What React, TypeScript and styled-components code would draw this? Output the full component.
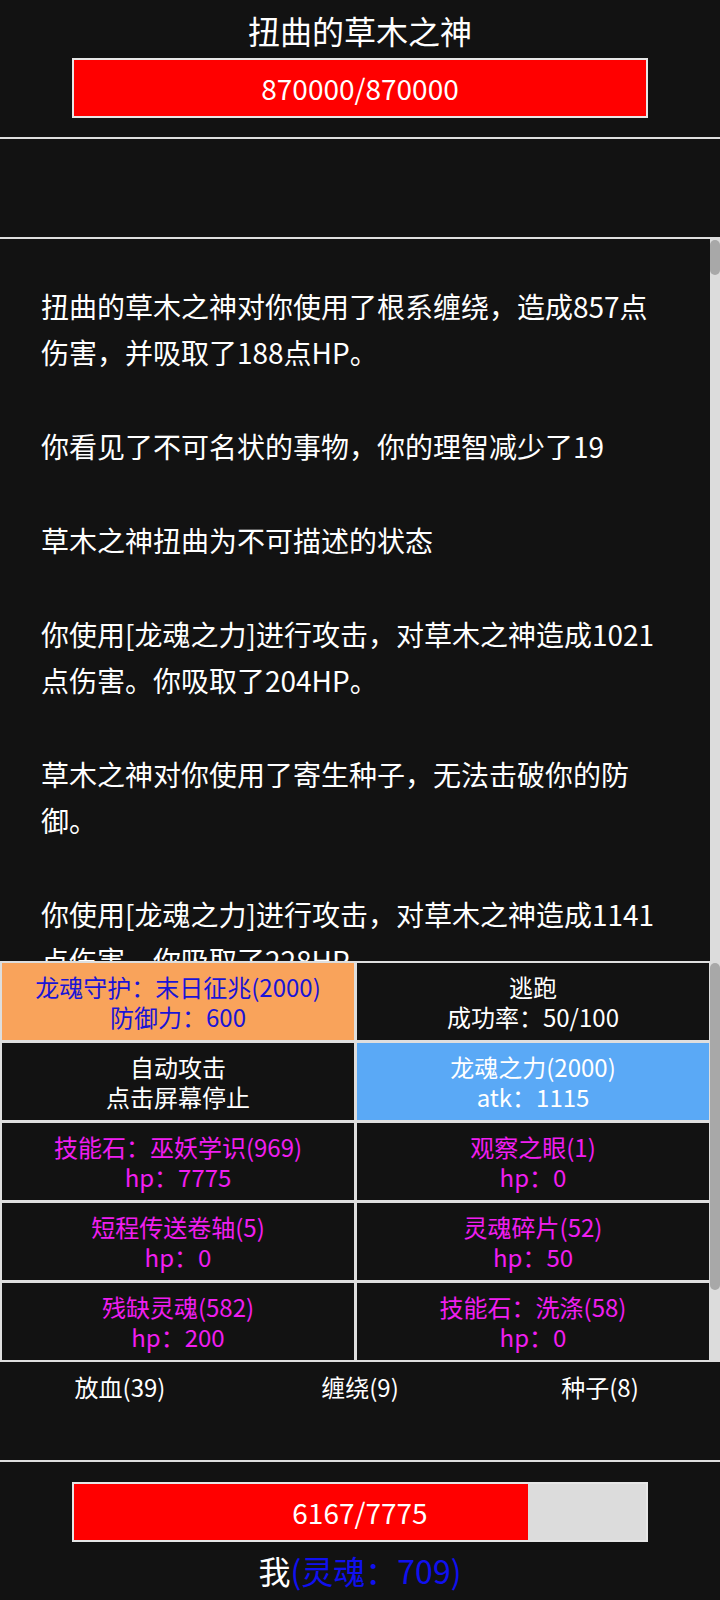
import styled, { createGlobalStyle } from 'styled-components';

const GlobalStyle = createGlobalStyle`
  html, body {
    margin: 0;
    padding: 0;
    background: #121212;
  }
  body {
    font-family: "Noto Sans CJK SC", "Noto Sans", sans-serif;
    color: #fff;
  }
  * {
    box-sizing: border-box;
  }
`;

const Page = styled.div`
  width: 720px;
  height: 1600px;
  display: flex;
  flex-direction: column;
  overflow: hidden;
`;

const BossPanel = styled.div`
  height: 139px;
  padding-top: 10px;
  border-bottom: 2px solid #dedede;
  display: flex;
  flex-direction: column;
  align-items: center;
`;

const Title = styled.div`
  font-size: 32px;
  line-height: 40px;
  color: #fff;
`;

const HpBar = styled.div<{ $mt: number }>`
  position: relative;
  width: 576px;
  height: 60px;
  margin-top: ${(p) => p.$mt}px;
  border: 2px solid #e6e6e6;
  background: #dcdcdc;
  display: flex;
  align-items: center;
  justify-content: center;
`;

const HpFill = styled.div`
  position: absolute;
  left: 0;
  top: 0;
  bottom: 0;
  background: #ff0000;
`;

const HpText = styled.span`
  position: relative;
  font-size: 28px;
  color: #fff;
`;

const BuffPanel = styled.div`
  height: 100px;
  border-bottom: 2px solid #dedede;
`;

/* scroll panes: content on the left, a thin track on the right */
const ScrollPane = styled.div<{ $h: number; $bg?: string }>`
  height: ${(p) => p.$h}px;
  display: flex;
  background: ${(p) => p.$bg || 'transparent'};
`;

const ScrollTrack = styled.div`
  width: 10px;
  flex: none;
  background: #dcdcdc;
`;

const ScrollThumb = styled.div<{ $h: number; $top: number }>`
  height: ${(p) => p.$h}px;
  margin-top: ${(p) => p.$top}px;
  background: #a8a8a8;
  border-radius: 5px;
`;

const Log = styled.div`
  flex: 1;
  overflow: hidden;
  padding: 44px 41px 0 41px;
`;

const LogLine = styled.p`
  margin: 0 0 48px 0;
  font-size: 28px;
  line-height: 46px;
  color: #fff;
`;

const ActionGrid = styled.div`
  flex: 1;
  overflow: hidden;
  background: #dedede;
  padding: 2px 1px 2px 2px;
  display: grid;
  grid-template-columns: 1fr 1fr;
  grid-auto-rows: 77px;
  gap: 3px;
`;

type Tone = 'plain' | 'guard' | 'attack' | 'item';

const toneBg: Record<Tone, string> = {
  plain: '#121212',
  guard: '#f9a35b',
  attack: '#5aa9f6',
  item: '#121212',
};

const toneColor: Record<Tone, string> = {
  plain: '#ffffff',
  guard: '#1a14d6',
  attack: '#ffffff',
  item: '#f01ef0',
};

const Cell = styled.div<{ $tone: Tone }>`
  background: ${(p) => toneBg[p.$tone]};
  color: ${(p) => toneColor[p.$tone]};
  display: flex;
  flex-direction: column;
  align-items: center;
  justify-content: center;
  text-align: center;
  font-size: 24px;
  line-height: 30px;
`;

const SkillRow = styled.div`
  height: 100px;
  padding-top: 9px;
  border-bottom: 2px solid #dedede;
  display: grid;
  grid-template-columns: repeat(3, 1fr);
  align-items: start;
`;

const Skill = styled.div`
  text-align: center;
  font-size: 24px;
  line-height: 32px;
  color: #fff;
`;

const PlayerPanel = styled.div`
  flex: 1;
  padding-top: 20px;
  display: flex;
  flex-direction: column;
  align-items: center;
`;

const PlayerName = styled.div`
  margin-top: 8px;
  font-size: 32px;
  line-height: 40px;
  color: #fff;
`;

const Soul = styled.span`
  color: #1010f0;
`;

const logLines = [
  '扭曲的草木之神对你使用了根系缠绕，造成857点伤害，并吸取了188点HP。',
  '你看见了不可名状的事物，你的理智减少了19',
  '草木之神扭曲为不可描述的状态',
  '你使用[龙魂之力]进行攻击，对草木之神造成1021点伤害。你吸取了204HP。',
  '草木之神对你使用了寄生种子，无法击破你的防御。',
  '你使用[龙魂之力]进行攻击，对草木之神造成1141点伤害。你吸取了228HP。',
  '扭曲的草木之神对你使用了放血，造成642点伤害。',
];

const actions: { tone: Tone; name: string; info: string }[] = [
  { tone: 'guard', name: '龙魂守护：末日征兆(2000)', info: '防御力：600' },
  { tone: 'plain', name: '逃跑', info: '成功率：50/100' },
  { tone: 'plain', name: '自动攻击', info: '点击屏幕停止' },
  { tone: 'attack', name: '龙魂之力(2000)', info: 'atk：1115' },
  { tone: 'item', name: '技能石：巫妖学识(969)', info: 'hp：7775' },
  { tone: 'item', name: '观察之眼(1)', info: 'hp：0' },
  { tone: 'item', name: '短程传送卷轴(5)', info: 'hp：0' },
  { tone: 'item', name: '灵魂碎片(52)', info: 'hp：50' },
  { tone: 'item', name: '残缺灵魂(582)', info: 'hp：200' },
  { tone: 'item', name: '技能石：洗涤(58)', info: 'hp：0' },
];

const bossSkills = ['放血(39)', '缠绕(9)', '种子(8)'];

const player = { hp: 6167, maxHp: 7775, soul: 709 };

export default function App() {
  return (
    <Page>
      <GlobalStyle />
      <BossPanel>
        <Title>扭曲的草木之神</Title>
        <HpBar $mt={8}>
          <HpFill style={{ width: '100%' }} />
          <HpText>870000/870000</HpText>
        </HpBar>
      </BossPanel>
      <BuffPanel />
      <ScrollPane $h={722}>
        <Log>
          {logLines.map((line, i) => (
            <LogLine key={i}>{line}</LogLine>
          ))}
        </Log>
        <ScrollTrack>
          <ScrollThumb $h={35} $top={1} />
        </ScrollTrack>
      </ScrollPane>
      <ScrollPane $h={401} $bg="#dedede">
        <ActionGrid>
          {actions.map((a) => (
            <Cell key={a.name} $tone={a.tone}>
              <div>{a.name}</div>
              <div>{a.info}</div>
            </Cell>
          ))}
        </ActionGrid>
        <ScrollTrack>
          <ScrollThumb $h={327} $top={2} />
        </ScrollTrack>
      </ScrollPane>
      <SkillRow>
        {bossSkills.map((s) => (
          <Skill key={s}>{s}</Skill>
        ))}
      </SkillRow>
      <PlayerPanel>
        <HpBar $mt={0}>
          <HpFill style={{ width: `${(player.hp / player.maxHp) * 100}%` }} />
          <HpText>
            {player.hp}/{player.maxHp}
          </HpText>
        </HpBar>
        <PlayerName>
          我<Soul>(灵魂：{player.soul})</Soul>
        </PlayerName>
      </PlayerPanel>
    </Page>
  );
}
